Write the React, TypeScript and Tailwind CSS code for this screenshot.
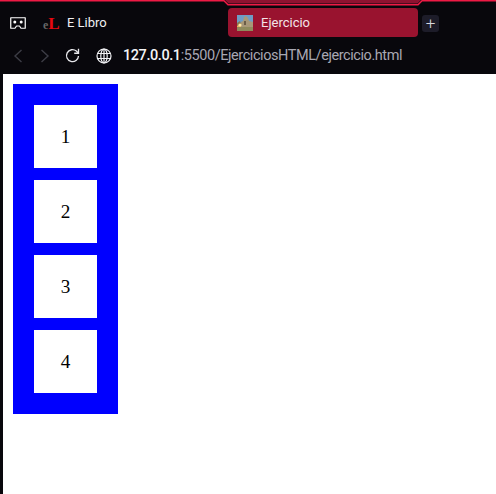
const ITEMS = ["1", "2", "3", "4"]

const Favicon = () => (
  <svg width="16" height="16" viewBox="0 0 16 16" className="shrink-0">
    <rect width="16" height="16" fill="#6f9cc4" />
    <rect y="8" width="7" height="4" fill="#e8b25a" />
    <path d="M0 8 L3 6 L4 9 L0 11Z" fill="#8a7a50" />
    <path d="M4 13 V7 L6 6 L7 2 L9 1 L11 3 L12 6 L16 7 V12 L4 13Z" fill="#a89878" />
    <rect x="7" y="6" width="2" height="4" fill="#6b5d48" />
    <circle cx="3" cy="10" r="1.6" fill="#ffe9a8" />
    <rect y="12" width="16" height="4" fill="#8f8a5c" />
  </svg>
)

const TabIcon = () => (
  <svg width="16" height="12" viewBox="0 0 16 12" fill="none" className="shrink-0">
    <path d="M0.75 0.75H15.25V11.25H11L9.5 9H6.5L5 11.25H0.75Z" stroke="#fff" strokeWidth="1.2" strokeLinejoin="round" />
    <circle cx="4.8" cy="5" r="1.5" fill="#fff" />
    <circle cx="11.2" cy="5" r="1.5" fill="#fff" />
  </svg>
)

const Chevron = ({ left }: { left?: boolean }) => (
  <svg width="10" height="14" viewBox="0 0 10 14" fill="none" stroke="#3d3d46" strokeWidth="1.4" className="shrink-0">
    <path d={left ? "M8.5 1 L2 7 L8.5 13" : "M1.5 1 L8 7 L1.5 13"} />
  </svg>
)

const Reload = () => (
  <svg width="15" height="15" viewBox="0 0 14 14" fill="none" stroke="#e8e8ec" strokeWidth="1.25" className="shrink-0">
    <path d="M12.6 7.4A5.6 5.6 0 1 1 10.6 2.8L12.4 4.6" />
    <path d="M12.6 0.8V4.9H8.6" />
  </svg>
)

const Globe = () => (
  <svg width="16" height="16" viewBox="0 0 16 16" fill="none" stroke="#f2f2f5" strokeWidth="1.2" className="shrink-0">
    <circle cx="8" cy="8" r="7" />
    <ellipse cx="8" cy="8" rx="3.2" ry="7" />
    <path d="M8 1V15M1.4 5.5H14.6M1.4 10.5H14.6" />
  </svg>
)

export default function App() {
  return (
    <div className="relative flex h-[494px] w-[496px] flex-col overflow-hidden bg-[#08070c] font-['Roboto',sans-serif]">
      {/* red line along the top of the window, with the raised part over the active tab */}
      <svg width="496" height="6" viewBox="0 0 496 6" fill="none" className="absolute left-0 top-0">
        <path d="M225 0H421L417.5 3.5H228.5Z" fill="#8f1230" />
        <path d="M0 0.75H224L228 4.75H418L422 0.75H496" stroke="#ee1a45" strokeWidth="1.5" />
      </svg>

      <div className="flex h-[42px] shrink-0 items-center pt-[4px]">
        <div className="ml-[10px] flex w-[33px] shrink-0">
          <TabIcon />
        </div>
        <div className="flex w-[185px] shrink-0 items-center">
          <span className="flex w-[16px] items-baseline font-['Liberation_Serif',serif] text-[12px] font-bold leading-none">
            <span className="text-[#666]">e</span>
            <span className="text-[17px] text-[#e8080f]">L</span>
          </span>
          <span className="ml-[8px] text-[13px] text-[#f0f0f2]">E Libro</span>
        </div>
        <div className="-mt-[1px] flex h-[29px] w-[190px] shrink-0 items-center rounded-[4px] bg-[#99132f] pl-[9px]">
          <Favicon />
          <span className="ml-[8px] text-[13px] text-[#f3e4e7]">Ejercicio</span>
        </div>
        <div className="ml-[4px] flex h-[17px] w-[17px] items-center justify-center rounded-[3px] bg-[#1d1c29] text-[17px] font-light leading-none text-[#d8d8de]">
          +
        </div>
      </div>

      <div className="flex h-[32px] shrink-0 items-center pb-[5px] pl-[13px]">
        <Chevron left />
        <div className="ml-[17px]">
          <Chevron />
        </div>
        <div className="ml-[15px]">
          <Reload />
        </div>
        <div className="ml-[16px]">
          <Globe />
        </div>
        <span className="ml-[11px] whitespace-nowrap text-[14.5px] tracking-[-0.43px] text-[#a9a8b3]">
          <span className="font-medium text-[#f4f4f6]">127.0.0.1</span>:5500/EjerciciosHTML/ejercicio.html
        </span>
      </div>

      <div className="ml-[3px] flex-1 bg-white pl-[10px] pt-[10px]">
        <div className="flex w-[105px] flex-col gap-[12px] bg-[#0000ff] p-[21px]">
          {ITEMS.map((item) => (
            <div
              key={item}
              className="flex h-[63px] w-[63px] items-center justify-center bg-white pt-[1px] font-['Liberation_Serif',serif] text-[19.2px] text-black"
            >
              {item}
            </div>
          ))}
        </div>
      </div>
    </div>
  )
}
